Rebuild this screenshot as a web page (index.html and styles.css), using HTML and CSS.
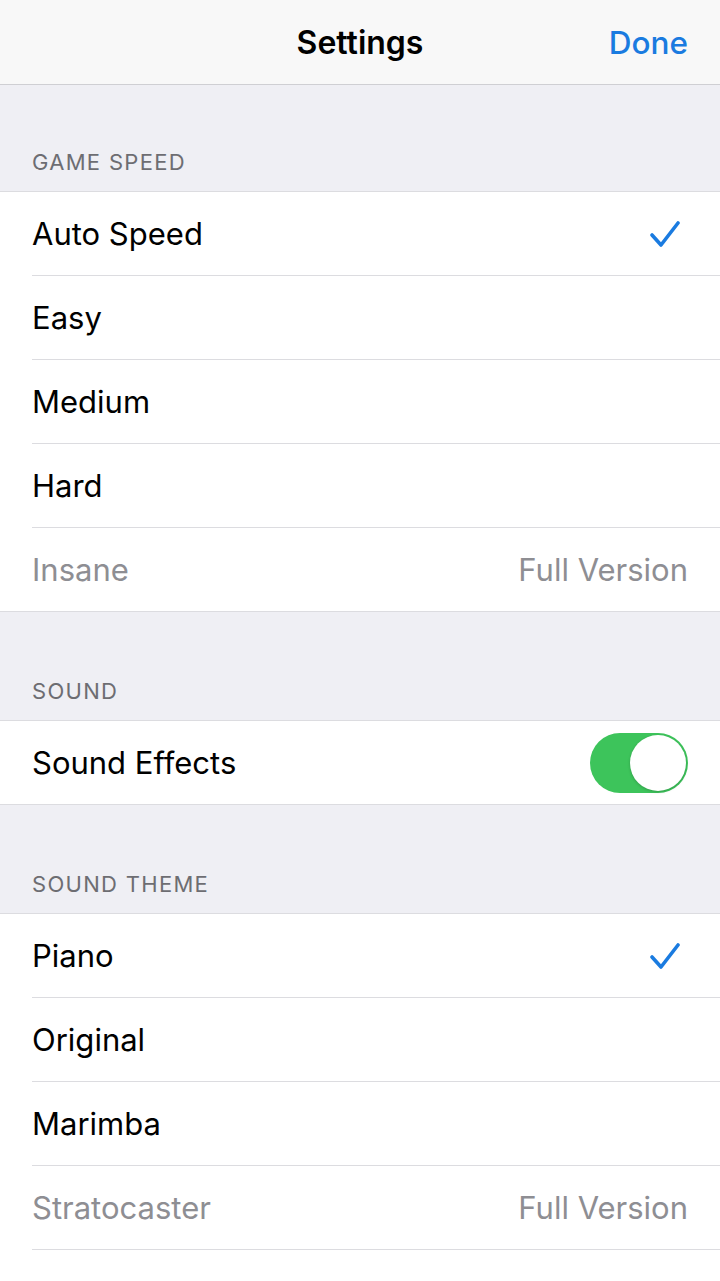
FILE: index.html
```html
<!DOCTYPE html>
<html lang="en">
<head>
    <meta charset="UTF-8">
    <meta name="viewport" content="width=device-width, initial-scale=1.0">
    <title>Settings</title>
    <link rel="stylesheet" href="styles.css">
</head>
<body>
    <header class="nav">
        <span class="nav-side"></span>
        <h1 class="nav-title">Settings</h1>
        <a class="nav-side nav-done" href="#">Done</a>
    </header>

    <div class="group-header first">GAME SPEED</div>
    <ul class="group">
        <li class="row">
            <span>Auto Speed</span>
            <svg class="check" width="30" height="26" viewBox="0 0 30 26"><polyline points="2,14 11,24 28,2" fill="none" stroke="#1a7be0" stroke-width="3.6" stroke-linecap="round" stroke-linejoin="round"/></svg>
        </li>
        <li class="row"><span>Easy</span></li>
        <li class="row"><span>Medium</span></li>
        <li class="row"><span>Hard</span></li>
        <li class="row locked"><span>Insane</span><span class="detail">Full Version</span></li>
    </ul>

    <div class="group-header">SOUND</div>
    <ul class="group">
        <li class="row">
            <span>Sound Effects</span>
            <span class="toggle on"><span class="knob"></span></span>
        </li>
    </ul>

    <div class="group-header">SOUND THEME</div>
    <ul class="group open">
        <li class="row">
            <span>Piano</span>
            <svg class="check" width="30" height="26" viewBox="0 0 30 26"><polyline points="2,14 11,24 28,2" fill="none" stroke="#1a7be0" stroke-width="3.6" stroke-linecap="round" stroke-linejoin="round"/></svg>
        </li>
        <li class="row"><span>Original</span></li>
        <li class="row"><span>Marimba</span></li>
        <li class="row locked"><span>Stratocaster</span><span class="detail">Full Version</span></li>
    </ul>
</body>
</html>
```

FILE: styles.css
```css
body {
    margin: 0;
    background: #fff;
    font-family: Inter, "Liberation Sans", sans-serif;
    color: #000;
}
.nav {
    height: 84px;
    display: flex;
    align-items: center;
    justify-content: space-between;
    padding: 0 32px;
    background: #f8f8f8;
    border-bottom: 1px solid #cfcfd3;
}
.nav-side {
    width: 90px;
}
.nav-title {
    margin: 0;
    font-size: 32px;
    font-weight: 600;
}
.nav-done {
    color: #1a7be0;
    font-size: 31.5px;
    font-weight: 500;
    text-decoration: none;
    text-align: right;
}
.group-header {
    height: 109px;
    box-sizing: border-box;
    display: flex;
    align-items: flex-end;
    padding: 0 32px 16px;
    background: #efeff4;
    border-bottom: 1px solid #dcdce0;
    color: #6d6d72;
    font-size: 22px;
    line-height: 26px;
    letter-spacing: 1.3px;
}
.group-header.first {
    height: 107px;
}
.group {
    list-style: none;
    margin: 0;
    padding: 0;
    background: #fff;
    border-bottom: 1px solid #dcdce0;
}
.group.open {
    border-bottom: none;
}
.row {
    height: 83px;
    display: flex;
    align-items: center;
    justify-content: space-between;
    margin-left: 32px;
    padding-right: 32px;
    border-bottom: 1px solid #dcdce0;
    font-size: 31px;
}
.group .row:last-child {
    border-bottom: none;
}
.group.open .row:last-child {
    border-bottom: 1px solid #dcdce0;
}
.locked,
.detail {
    color: #8e8e93;
}
.check {
    margin-right: 8px;
}
.toggle {
    width: 98px;
    height: 60px;
    box-sizing: border-box;
    border-radius: 30px;
    padding: 2px;
    display: flex;
    justify-content: flex-end;
    background: #3dc45b;
}
.knob {
    width: 56px;
    height: 56px;
    border-radius: 50%;
    background: #fff;
    box-shadow: 0 1px 3px rgba(0, 0, 0, 0.2);
}
```
